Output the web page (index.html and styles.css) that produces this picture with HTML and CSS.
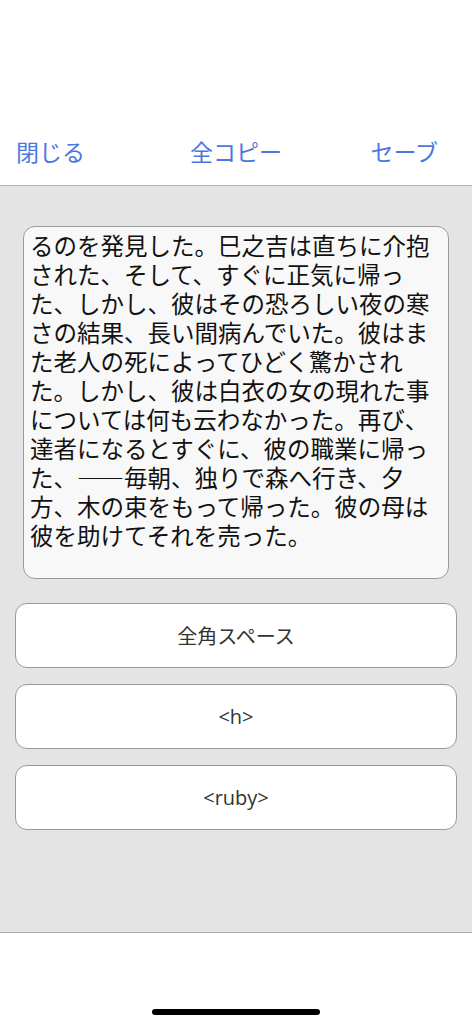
FILE: index.html
```html
<!DOCTYPE html>
<html lang="ja">
<head>
<meta charset="utf-8">
<link rel="stylesheet" href="styles.css">
</head>
<body>
<div class="screen">
  <header class="header">
    <nav class="nav">
      <span class="nav-item nav-left">閉じる</span>
      <span class="nav-item nav-center">全コピー</span>
      <span class="nav-item nav-right">セーブ</span>
    </nav>
  </header>
  <main class="content">
    <div class="editor">るのを発見した。巳之吉は直ちに介抱<br>された、そして、すぐに正気に帰っ<br>た、しかし、彼はその恐ろしい夜の寒<br>さの結果、長い間病んでいた。彼はま<br>た老人の死によってひどく驚かされ<br>た。しかし、彼は白衣の女の現れた事<br>については何も云わなかった。再び、<br>達者になるとすぐに、彼の職業に帰っ<br>た、——毎朝、独りで森へ行き、夕<br>方、木の束をもって帰った。彼の母は<br>彼を助けてそれを売った。</div>
    <div class="buttons">
      <button class="btn">全角スペース</button>
      <button class="btn">&lt;h&gt;</button>
      <button class="btn">&lt;ruby&gt;</button>
    </div>
  </main>
  <footer class="footer">
    <div class="home-indicator"></div>
  </footer>
</div>
</body>
</html>
```

FILE: styles.css
```css
* { box-sizing: border-box; }
html, body {
  margin: 0;
  padding: 0;
  background: #ffffff;
}
body {
  font-family: "Noto Sans CJK JP", "Noto Sans", sans-serif;
  width: 472px;
  height: 1024px;
  overflow: hidden;
}
.screen {
  display: flex;
  flex-direction: column;
  height: 1024px;
}
.header {
  height: 186px;
  padding-top: 129px;
  border-bottom: 1px solid #b3b3b3;
  background: #ffffff;
}
.nav {
  display: grid;
  grid-template-columns: 1fr auto 1fr;
  align-items: center;
  height: 44px;
  padding: 0 16px;
}
.nav-item {
  font-size: 23px;
  line-height: 44px;
  color: #4a78e0;
  white-space: nowrap;
}
.nav-left { justify-self: start; }
.nav-center { justify-self: center; }
.nav-right { justify-self: end; margin-right: 18px; }
.content {
  height: 747px;
  background: #e4e4e4;
  border-bottom: 1px solid #aaaaaa;
  padding: 40px 15px 0 15px;
  display: flex;
  flex-direction: column;
}
.editor {
  margin: 0 8px;
  height: 353px;
  background: #f8f8f8;
  border: 1px solid #9a9a9a;
  border-radius: 12px;
  padding: 4px 6px 0 6px;
  font-size: 23.5px;
  line-height: 29px;
  color: #111111;
  white-space: nowrap;
  overflow: hidden;
}
.buttons {
  display: flex;
  flex-direction: column;
  gap: 16px;
  margin-top: 24px;
}
.btn {
  display: block;
  width: 100%;
  height: 65px;
  background: #ffffff;
  border: 1px solid #999999;
  border-radius: 12px;
  font-family: "Open Sans", "Noto Sans CJK JP", sans-serif;
  font-size: 20px;
  font-weight: 400;
  color: #333333;
  padding: 0;
  margin: 0;
}
.footer {
  flex: 1;
  display: flex;
  justify-content: center;
  align-items: flex-end;
  padding-bottom: 9px;
  background: #ffffff;
}
.home-indicator {
  width: 168px;
  height: 6px;
  border-radius: 3px;
  background: #000000;
}
```
